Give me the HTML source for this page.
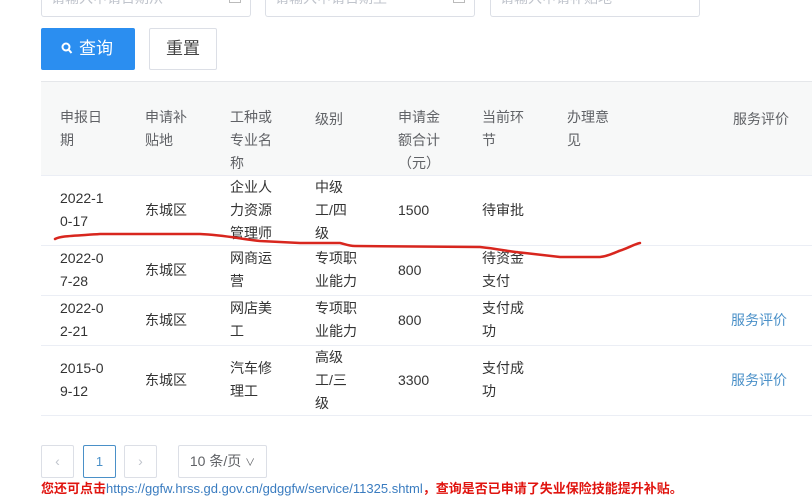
<!DOCTYPE html>
<html><head><meta charset="utf-8"><style>
*{margin:0;padding:0;box-sizing:border-box}
body{width:812px;height:494px;overflow:hidden;background:#fff;font-family:"Liberation Sans","Noto Sans CJK SC",sans-serif;font-size:14px;color:#606266;position:relative}
.a{position:absolute}
.inp{position:absolute;top:-10px;height:27px;border:1px solid #dcdfe6;border-top:none;border-radius:0 0 3px 3px;overflow:hidden;color:#c0c4cc;font-size:14px;padding-left:9px;line-height:16px}
.inp i{position:absolute;right:9px;top:2px;width:12px;height:11px;border:1.5px solid #bbb;border-top:none}
.c{position:absolute;line-height:23px;font-size:14px}
.hl{position:absolute;left:41px;right:0;height:1px;background:#ebeef5}
.pg{position:absolute;top:445px;height:33px;border:1px solid #dcdfe6;border-radius:2px;text-align:center;line-height:31px;color:#c0c4cc;font-size:14px}
</style></head><body>
<div class="inp" style="left:41px;width:210px">请输入申请日期从<i></i></div>
<div class="inp" style="left:265px;width:210px">请输入申请日期至<i></i></div>
<div class="inp" style="left:490px;width:210px">请输入申请补贴地</div>
<div class="a" style="left:41px;top:28px;width:94px;height:42px;background:#2b8ef0;border-radius:2px;color:#fff;font-size:17px;line-height:42px;padding-left:20px">
<svg width="12" height="13" viewBox="0 0 12 13" style="vertical-align:-1px;margin-right:6px"><circle cx="5" cy="5" r="3.5" fill="none" stroke="#fff" stroke-width="2"/><path d="M7.5 7.5L10.5 11" stroke="#fff" stroke-width="2"/></svg>查询</div>
<div class="a" style="left:149px;top:28px;width:68px;height:42px;border:1px solid #dcdfe6;border-radius:2px;font-size:17px;line-height:40px;text-align:center;color:#444">重置</div>
<div class="a" style="left:41px;top:81px;right:0;height:94px;background:#f7f8f8;border-top:1px solid #e5e7ea"></div>
<div class="hl" style="top:175px"></div>
<div class="hl" style="top:245px"></div>
<div class="hl" style="top:295px"></div>
<div class="hl" style="top:345px"></div>
<div class="hl" style="top:415px"></div>
<div class="c" style="left:60px;top:106px">申报日<br>期</div>
<div class="c" style="left:145px;top:106px">申请补<br>贴地</div>
<div class="c" style="left:230px;top:106px">工种或<br>专业名<br>称</div>
<div class="c" style="left:315px;top:108px">级别</div>
<div class="c" style="left:398px;top:106px">申请金<br>额合计<br>（元）</div>
<div class="c" style="left:482px;top:106px">当前环<br>节</div>
<div class="c" style="left:567px;top:106px">办理意<br>见</div>
<div class="c" style="left:733px;top:108px">服务评价</div>
<div class="c" style="left:60px;top:187px;color:#333">2022-1<br>0-17</div>
<div class="c" style="left:145px;top:199px;color:#333">东城区</div>
<div class="c" style="left:230px;top:176px;color:#333">企业人<br>力资源<br>管理师</div>
<div class="c" style="left:315px;top:176px;color:#333">中级<br>工/四<br>级</div>
<div class="c" style="left:398px;top:199px;color:#333">1500</div>
<div class="c" style="left:482px;top:199px;color:#333">待审批</div>
<div class="c" style="left:60px;top:247px;color:#333">2022-0<br>7-28</div>
<div class="c" style="left:145px;top:259px;color:#333">东城区</div>
<div class="c" style="left:230px;top:247px;color:#333">网商运<br>营</div>
<div class="c" style="left:315px;top:247px;color:#333">专项职<br>业能力</div>
<div class="c" style="left:398px;top:259px;color:#333">800</div>
<div class="c" style="left:482px;top:247px;color:#333">待资金<br>支付</div>
<div class="c" style="left:60px;top:297px;color:#333">2022-0<br>2-21</div>
<div class="c" style="left:145px;top:309px;color:#333">东城区</div>
<div class="c" style="left:230px;top:297px;color:#333">网店美<br>工</div>
<div class="c" style="left:315px;top:297px;color:#333">专项职<br>业能力</div>
<div class="c" style="left:398px;top:309px;color:#333">800</div>
<div class="c" style="left:482px;top:297px;color:#333">支付成<br>功</div>
<div class="c" style="left:731px;top:309px;color:#4a90c8">服务评价</div>
<div class="c" style="left:60px;top:357px;color:#333">2015-0<br>9-12</div>
<div class="c" style="left:145px;top:369px;color:#333">东城区</div>
<div class="c" style="left:230px;top:357px;color:#333">汽车修<br>理工</div>
<div class="c" style="left:315px;top:346px;color:#333">高级<br>工/三<br>级</div>
<div class="c" style="left:398px;top:369px;color:#333">3300</div>
<div class="c" style="left:482px;top:357px;color:#333">支付成<br>功</div>
<div class="c" style="left:731px;top:369px;color:#4a90c8">服务评价</div>
<svg class="a" style="left:0;top:0" width="812" height="494"><path d="M55 239 C60 236 70 236 100 234 L200 234 C225 235 240 239 260 241 L300 243 L340 243 C345 244 348 246 355 246 L480 247 C500 249 510 252 525 253 L560 257 L600 257 C610 256 615 252 622 250 C630 247 635 244 640 243" fill="none" stroke="#d8261e" stroke-width="2.5" stroke-linecap="round"/></svg>
<div class="pg" style="left:41px;width:33px">‹</div>
<div class="pg" style="left:83px;width:33px;border-color:#4a90c8;color:#4a90c8;font-size:13px">1</div>
<div class="pg" style="left:124px;width:33px">›</div>
<div class="pg" style="left:178px;width:89px;color:#606266">10 条/页 <span style="font-size:10px">∨</span></div>
<div class="a" style="left:41px;top:481px;font-size:13px;font-weight:bold;color:#e0140f;white-space:nowrap;line-height:16px">您还可点击<span style="color:#3a7cc0;font-weight:normal">https://ggfw.hrss.gd.gov.cn/gdggfw/service/11325.shtml</span>，查询是否已申请了失业保险技能提升补贴。</div>
</body></html>
